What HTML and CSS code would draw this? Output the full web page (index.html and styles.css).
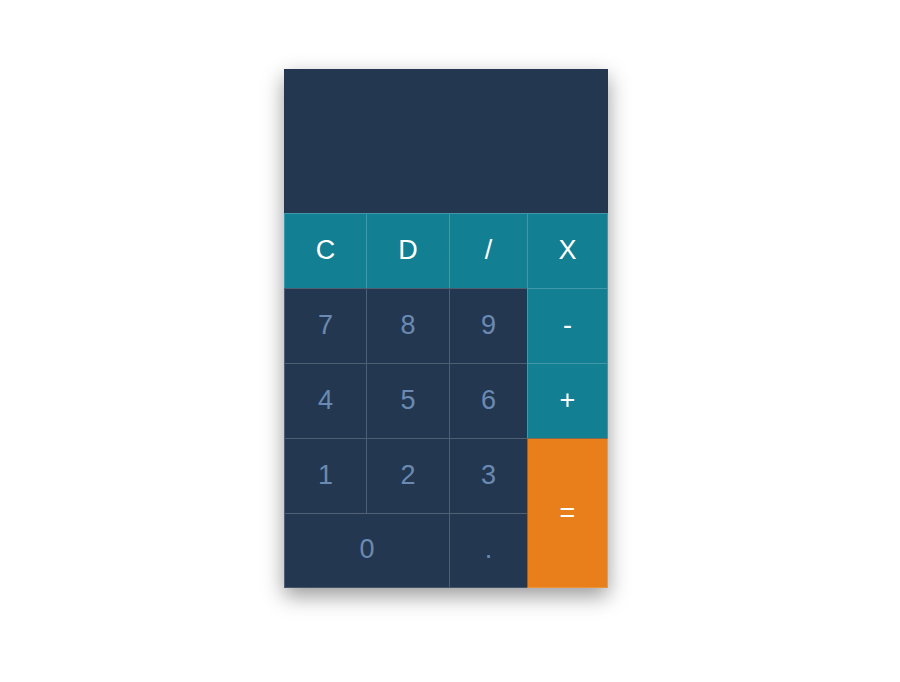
FILE: index.html
```html
<!DOCTYPE html>
<html>
<head>
<meta charset="utf-8">
<link rel="stylesheet" href="styles.css">
</head>
<body>
<div class="page">
  <div class="calc">
    <div class="display"></div>
    <div class="keypad">
      <div class="key op">C</div>
      <div class="key op">D</div>
      <div class="key op">/</div>
      <div class="key op edge-r">X</div>
      <div class="key num">7</div>
      <div class="key num">8</div>
      <div class="key num">9</div>
      <div class="key op edge-r">-</div>
      <div class="key num">4</div>
      <div class="key num">5</div>
      <div class="key num">6</div>
      <div class="key op edge-r">+</div>
      <div class="key num">1</div>
      <div class="key num">2</div>
      <div class="key num">3</div>
      <div class="key eq edge-r edge-b">=</div>
      <div class="key num zero edge-b">0</div>
      <div class="key num edge-b">.</div>
    </div>
  </div>
</div>
</body>
</html>
```
FILE: styles.css
```css
html, body {
  margin: 0;
  padding: 0;
  background: #ffffff;
  min-height: 682px;
}
.page {
  padding: 69px 0 0 284px;
  min-height: 682px;
  box-sizing: border-box;
}
.calc {
  width: 324px;
  box-shadow: 0 8px 20px rgba(0, 0, 0, 0.4);
  font-family: "Liberation Sans", Arial, sans-serif;
}
.display {
  height: 144px;
  background: #233850;
}
.keypad {
  display: grid;
  grid-template-columns: 82px 83px 78px 81px;
  grid-auto-rows: 75px;
}
.key {
  display: flex;
  align-items: center;
  justify-content: center;
  font-size: 27px;
  padding-bottom: 2px;
  box-sizing: border-box;
  border-left: 1px solid rgba(255, 255, 255, 0.2);
  border-top: 1px solid rgba(255, 255, 255, 0.2);
}
.op {
  background: #127f93;
  color: #ffffff;
}
.num {
  background: #233850;
  color: #6a8ab4;
}
.eq {
  background: #e87f1b;
  color: #ffffff;
  grid-row: span 2;
  border-top-color: rgba(80, 95, 110, 0.7);
  border-left-color: rgba(80, 95, 110, 0.7);
  padding-bottom: 0;
}
.zero {
  grid-column: span 2;
}
.edge-r {
  border-right: 1px solid rgba(255, 255, 255, 0.2);
}
.edge-b {
  border-bottom: 1px solid rgba(255, 255, 255, 0.15);
}
```
